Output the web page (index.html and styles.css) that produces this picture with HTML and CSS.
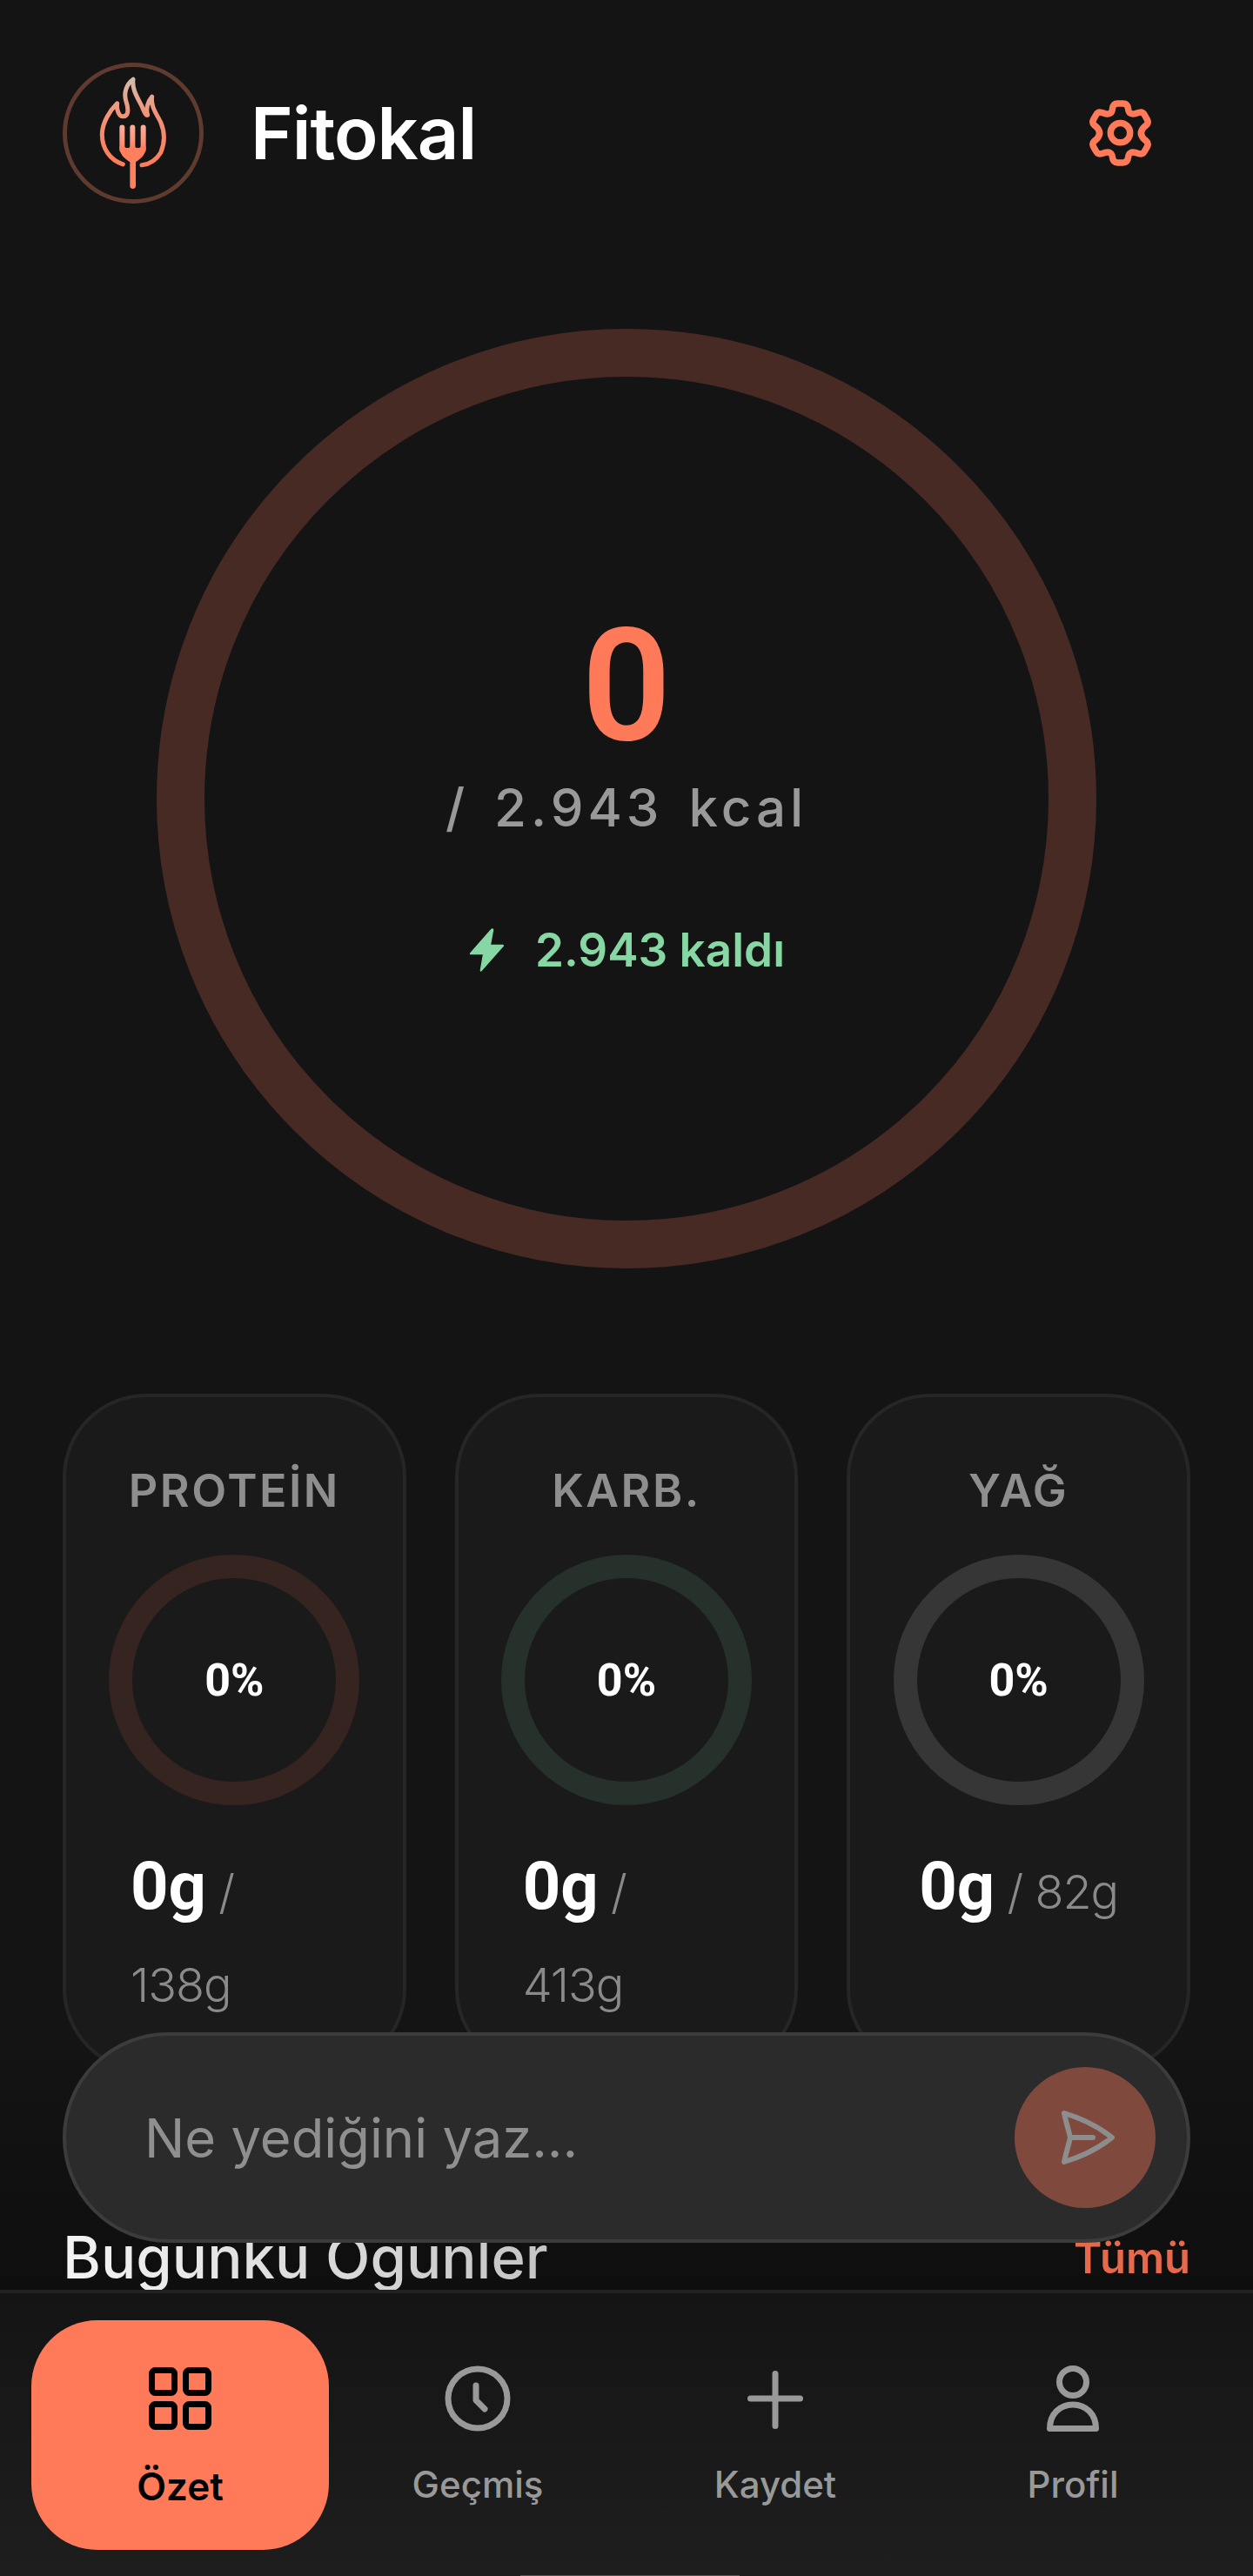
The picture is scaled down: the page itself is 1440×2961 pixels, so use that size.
FILE: index.html
```html
<!DOCTYPE html>
<html lang="tr">
<head>
    <meta charset="UTF-8">
    <meta name="viewport" content="width=device-width, initial-scale=1.0">
    <title>Fitokal</title>
    <link rel="stylesheet" href="styles.css">
</head>
<body>
    <div class="app">
        <header class="header">
            <div class="brand">
                <div class="logo">
                    <svg viewBox="-20 0 240 395" width="80" height="132" fill="none">
                        <defs>
                            <linearGradient id="flame" gradientUnits="userSpaceOnUse" x1="0" y1="9" x2="0" y2="310">
                                <stop offset="0" stop-color="#d3bcae"/>
                                <stop offset="0.4" stop-color="#f29478"/>
                                <stop offset="1" stop-color="#ff7a59"/>
                            </linearGradient>
                            <linearGradient id="tines" gradientUnits="userSpaceOnUse" x1="0" y1="170" x2="0" y2="260">
                                <stop offset="0" stop-color="#f7b09c"/>
                                <stop offset="1" stop-color="#ff8061"/>
                            </linearGradient>
                        </defs>
                        <path d="M65 305C20 290-8 250-7 200C-6 160 20 120 45 95C42 115 50 140 65 140C85 140 85 115 75 85C68 60 75 30 100 12C95 45 115 75 130 105C138 125 145 140 150 135C143 115 150 90 165 72C160 105 180 130 195 160C210 195 210 230 195 265C180 290 155 305 130 308" stroke="url(#flame)" stroke-width="15" stroke-linecap="round" stroke-linejoin="round"/>
                        <path d="M62 178V255M98 178V255M135 178V255" stroke="url(#tines)" stroke-width="18" stroke-linecap="round"/>
                        <path d="M53 245C53 270 68 285 89 297V380C89 393 109 393 109 380V297C130 285 144 270 144 245C144 240 126 240 126 245C126 250 107 250 107 245C107 240 89 240 89 245C89 250 71 250 71 245C71 240 53 240 53 245Z" fill="#ff7f5f"/>
                    </svg>
                </div>
                <h1 class="brand-name">Fitokal</h1>
            </div>
            <svg class="gear" viewBox="331 104 220 230" width="75" height="78" fill="none" stroke="#ff7a59" stroke-width="22" stroke-linejoin="round">
                <path d="M414 138Q416 119 432 119H450Q466 119 468 138Q470 158 492 153L505 149Q517 146 523 157L532 173Q538 184 529 192L520 200Q503 219 520 238L529 246Q538 254 532 265L523 281Q517 292 505 289L492 285Q470 280 468 300Q466 319 450 319H432Q416 319 414 300Q412 280 390 285L377 289Q365 292 359 281L350 265Q344 254 353 246L362 238Q379 219 362 200L353 192Q344 184 350 173L359 157Q365 146 377 149L390 153Q412 158 414 138Z"/>
                <circle cx="441" cy="218" r="33"/>
            </svg>
        </header>

        <section class="calorie-ring">
            <div class="calorie-value">0</div>
            <div class="calorie-goal">/ 2.943 kcal</div>
            <div class="calorie-left">
                <svg viewBox="0 0 41 48" width="43" height="50" fill="#86d7a4"><path d="M25 1 2 27c-1 1 0 2 1 2h13l-3 17c0 2 1 2 2 1l24-27c1-1 0-2-1-2H25l3-16c0-2-2-2-3-1z"/></svg>
                <span>2.943 kaldı</span>
            </div>
        </section>

        <section class="macros">
            <div class="macro-card">
                <div class="macro-label">PROTEİN</div>
                <div class="macro-ring ring-protein">0%</div>
                <div class="macro-amount"><b>0g</b> <span>/</span> <span>138g</span></div>
            </div>
            <div class="macro-card">
                <div class="macro-label">KARB.</div>
                <div class="macro-ring ring-carb">0%</div>
                <div class="macro-amount"><b>0g</b> <span>/</span> <span>413g</span></div>
            </div>
            <div class="macro-card">
                <div class="macro-label">YAĞ</div>
                <div class="macro-ring ring-fat">0%</div>
                <div class="macro-amount"><b>0g</b> <span>/</span> <span>82g</span></div>
            </div>
        </section>

        <div class="fade"></div>

        <section class="meals-head">
            <h2>Bugünkü Öğünler</h2>
            <a class="meals-all">Tümü</a>
        </section>

        <div class="composer">
            <span class="composer-text">Ne yediğini yaz...</span>
            <button class="send">
                <svg viewBox="0 0 62 62" width="62" height="62" fill="none" stroke="#8d8d8d" stroke-width="6" stroke-linecap="round" stroke-linejoin="round">
                    <path d="M4 3C24 9 44 19 59 31C44 43 24 53 4 59C6 49 9 40 11 31C9 22 6 13 4 3Z"/>
                    <path d="M11 31H37"/>
                </svg>
            </button>
        </div>

        <nav class="tabbar">
            <div class="tab active">
                <svg viewBox="0 0 72 72" width="72" height="72" fill="none" stroke="#000" stroke-width="7">
                    <rect x="3.5" y="3.5" width="26" height="26" rx="4"/>
                    <rect x="42.5" y="3.5" width="26" height="26" rx="4"/>
                    <rect x="3.5" y="42.5" width="26" height="26" rx="4"/>
                    <rect x="42.5" y="42.5" width="26" height="26" rx="4"/>
                </svg>
                <span>Özet</span>
            </div>
            <div class="tab">
                <svg viewBox="0 0 76 76" width="76" height="76" fill="none" stroke="#999" stroke-width="7" stroke-linecap="round" stroke-linejoin="round">
                    <circle cx="38" cy="38" r="34"/>
                    <path d="M36 23V40L46 50"/>
                </svg>
                <span>Geçmiş</span>
            </div>
            <div class="tab">
                <svg viewBox="0 0 76 76" width="76" height="76" fill="none" stroke="#999" stroke-width="7" stroke-linecap="round">
                    <path d="M38 9.5V69.5M9.5 38H66.5"/>
                </svg>
                <span>Kaydet</span>
            </div>
            <div class="tab">
                <svg viewBox="0 0 76 76" width="76" height="76" fill="none" stroke="#999" stroke-width="7" stroke-linejoin="round">
                    <circle cx="38" cy="19" r="15.5"/>
                    <path d="M11.5 72.5C11.5 56 23 45 38 45S64.5 56 64.5 72.5Z"/>
                </svg>
                <span>Profil</span>
            </div>
            <div class="home-bar"></div>
        </nav>
    </div>
</body>
</html>
```

FILE: styles.css
```css
* {
    box-sizing: border-box;
}
html, body {
    margin: 0;
    background: #141414;
}
body {
    font-family: Inter, "Noto Sans", sans-serif;
    color: #fff;
}
.app {
    position: relative;
    width: 1440px;
    height: 2961px;
    overflow: hidden;
    padding: 72px 72px 0;
}
.header {
    display: flex;
    justify-content: space-between;
    align-items: center;
    height: 162px;
    padding-right: 43px;
}
.brand {
    display: flex;
    align-items: center;
    gap: 54px;
}
.logo {
    width: 162px;
    height: 162px;
    border: 5px solid #5f3a2e;
    border-radius: 50%;
    display: flex;
    align-items: center;
    justify-content: center;
}
.brand-name {
    margin: 0;
    font-size: 83px;
    font-weight: 600;
    letter-spacing: -1px;
}

.calorie-ring {
    width: 1080px;
    height: 1080px;
    margin: 144px auto 0;
    border: 55px solid #472a23;
    border-radius: 50%;
    display: flex;
    flex-direction: column;
    align-items: center;
    padding-top: 268px;
}
.calorie-value {
    font-family: Roboto, sans-serif;
    font-size: 180px;
    line-height: 176px;
    font-weight: 600;
    color: #ff7a59;
}
.calorie-goal {
    margin-top: 15px;
    font-size: 60px;
    line-height: 72px;
    font-weight: 500;
    letter-spacing: 5px;
    word-spacing: 8px;
    color: #999;
}
.calorie-left {
    display: flex;
    align-items: center;
    gap: 34px;
    margin-top: 96px;
    font-size: 53px;
    font-weight: 600;
    color: #86d7a4;
}

.macros {
    display: grid;
    grid-template-columns: repeat(3, minmax(0, 1fr));
    gap: 56px;
    margin-top: 144px;
}
.macro-card {
    height: 780px;
    padding: 78px 74px 0;
    display: flex;
    flex-direction: column;
    align-items: center;
    background: #1a1a1a;
    border: 4px solid #262626;
    border-radius: 96px;
}
.macro-label {
    font-size: 52px;
    line-height: 60px;
    font-weight: 600;
    letter-spacing: 2.5px;
    white-space: nowrap;
    color: #8e8e8e;
}
.macro-ring {
    flex: none;
    width: 288px;
    height: 288px;
    margin-top: 43px;
    border: 27px solid #352420;
    border-radius: 50%;
    display: flex;
    align-items: center;
    justify-content: center;
    font-family: Roboto, sans-serif;
    font-size: 52px;
    font-weight: 700;
}
.ring-carb {
    border-color: #26312b;
}
.ring-fat {
    border-color: #363636;
}
.macro-amount {
    margin-top: 40px;
    line-height: 107px;
    font-size: 54px;
    font-weight: 300;
    letter-spacing: -1px;
    color: #8a8a8a;
}
.macro-amount b {
    font-family: Roboto, sans-serif;
    font-size: 76px;
    font-weight: 700;
    letter-spacing: 0;
    color: #fff;
}

.fade {
    position: absolute;
    left: 0;
    right: 0;
    top: 2340px;
    height: 292px;
    background: linear-gradient(180deg, rgba(12, 12, 12, 0), rgba(12, 12, 12, 0.75));
}
.meals-head {
    position: absolute;
    left: 72px;
    right: 72px;
    top: 2555px;
    display: flex;
    justify-content: space-between;
    align-items: flex-start;
}
.meals-head h2 {
    margin: 0;
    font-size: 67px;
    line-height: 80px;
    font-weight: 500;
    background: linear-gradient(90deg, #f4f4f4, #c4c4c4);
    background-clip: text;
    -webkit-background-clip: text;
    color: transparent;
}
.meals-all {
    margin-top: 11px;
    font-size: 49px;
    line-height: 60px;
    font-weight: 600;
    color: #e5694a;
}

.composer {
    position: absolute;
    left: 72px;
    top: 2336px;
    width: 1296px;
    height: 242px;
    padding: 0 36px 0 90px;
    display: flex;
    align-items: center;
    justify-content: space-between;
    background: #2b2b2b;
    border: 4px solid #3c3c3c;
    border-radius: 121px;
    font-size: 61.5px;
    font-weight: 400;
    color: #8f8f8f;
}
.send {
    width: 162px;
    height: 162px;
    padding: 0 0 0 6px;
    border: none;
    border-radius: 50%;
    background: #7f4a3d;
    display: flex;
    align-items: center;
    justify-content: center;
}

.tabbar {
    position: absolute;
    left: 0;
    right: 0;
    top: 2632px;
    bottom: 0;
    padding: 31px 36px 0;
    display: grid;
    grid-template-columns: repeat(4, 1fr);
    align-items: start;
    background: linear-gradient(180deg, #141414, #1e1e1e);
    border-top: 4px solid #222;
}
.tab {
    height: 264px;
    border-radius: 76px;
    display: flex;
    flex-direction: column;
    align-items: center;
    padding-top: 52px;
    font-size: 42px;
    line-height: 54px;
    font-weight: 500;
    color: #999;
}
.tab span {
    margin-top: 34px;
}
.tab.active {
    background: #ff7a59;
    color: #000;
    font-size: 44px;
    font-weight: 600;
}
.tab.active svg {
    margin-top: 2px;
}
.tab.active span {
    margin-top: 38px;
}
.home-bar {
    position: absolute;
    left: 598px;
    bottom: 0;
    width: 252px;
    height: 1px;
    background: #555;
}
```
